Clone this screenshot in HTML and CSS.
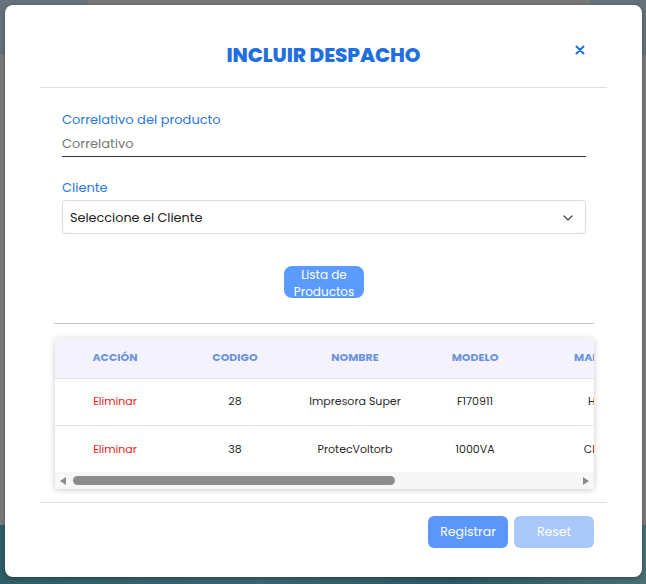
FILE: index.html
```html
<!DOCTYPE html>
<html lang="es">
<head>
<meta charset="utf-8">
<title>Incluir Despacho</title>
<link rel="stylesheet" href="styles.css">
</head>
<body>
<div class="backdrop">
  <div class="bg-top"><div class="bg-side"></div><div class="bg-mid"></div><div class="bg-side bg-side-r"></div></div>
  <div class="bg-main"></div>
  <div class="bg-bottom"></div>
</div>

<div class="modal">
  <div class="modal-header">
    <h1 class="modal-title">INCLUIR DESPACHO</h1>
    <button class="close-btn" aria-label="Cerrar">
      <svg width="10" height="10" viewBox="0 0 10 10"><path d="M1.5 1.5 L8.5 8.5 M8.5 1.5 L1.5 8.5" stroke="#1f6fe0" stroke-width="2" stroke-linecap="round"/></svg>
    </button>
  </div>

  <div class="modal-body">
    <div class="field">
      <label class="field-label">Correlativo del producto</label>
      <div class="line-input">Correlativo</div>
    </div>
    <div class="field field-client">
      <label class="field-label">Cliente</label>
      <div class="select">
        <span>Seleccione el Cliente</span>
        <svg width="10" height="6" viewBox="0 0 10 6"><path d="M1 1 L5 5 L9 1" fill="none" stroke="#444" stroke-width="1.3" stroke-linecap="round" stroke-linejoin="round"/></svg>
      </div>
    </div>
    <div class="list-row">
      <button class="list-btn">Lista de<br>Productos</button>
    </div>
  </div>

  <div class="table-divider"></div>

  <div class="table-card">
    <div class="table-scroll">
      <table class="products">
        <thead>
          <tr><th>ACCIÓN</th><th>CODIGO</th><th>NOMBRE</th><th>MODELO</th><th>MARCA</th></tr>
        </thead>
        <tbody>
          <tr><td class="del">Eliminar</td><td>28</td><td>Impresora Super</td><td>F170911</td><td>HP</td></tr>
          <tr><td class="del">Eliminar</td><td>38</td><td>ProtecVoltorb</td><td>1000VA</td><td>CDP</td></tr>
        </tbody>
      </table>
    </div>
    <div class="hscroll">
      <span class="arrow arrow-l"></span>
      <div class="track"><div class="thumb"></div></div>
      <span class="arrow arrow-r"></span>
    </div>
  </div>

  <div class="modal-footer">
    <button class="btn btn-primary">Registrar</button>
    <button class="btn btn-disabled">Reset</button>
  </div>
</div>
</body>
</html>
```

FILE: styles.css
```css
* { box-sizing: border-box; }
html, body { margin: 0; padding: 0; }
body {
  width: 646px;
  height: 584px;
  overflow: hidden;
  font-family: "Poppins", "Open Sans", "DejaVu Sans", sans-serif;
  position: relative;
  background: #7a7a7a;
}

.backdrop { display: flex; flex-direction: column; height: 584px; }
.bg-top { display: flex; height: 55px; }
.bg-side { width: 88px; background: #66727a; }
.bg-side-r { width: 56px; }
.bg-mid { flex: 1; background: #787878; }
.bg-main { flex: 1; background: #7b7b7b; }
.bg-bottom { height: 59px; background: linear-gradient(90deg, #2f5d66 0%, #3a6670 40%, #2c5860 70%, #4a6e74 100%); }

.modal {
  position: absolute;
  left: 5px;
  top: 5px;
  width: 637px;
  height: 572px;
  background: #fff;
  border-radius: 8px;
  box-shadow: 0 1px 4px rgba(0,0,0,0.35);
  padding: 0 35px;
}

.modal-header {
  height: 83px;
  border-bottom: 1px solid #dedede;
  position: relative;
  display: flex;
  align-items: center;
  justify-content: center;
}
.modal-title {
  margin: 0;
  margin-top: 18px;
  font-size: 20px;
  font-weight: 800;
  color: #1f6fe0;
  letter-spacing: -0.1px;
  line-height: 24px;
}
.close-btn {
  position: absolute;
  right: 20px;
  top: 38px;
  width: 14px;
  height: 14px;
  padding: 0;
  border: 0;
  background: none;
  display: flex;
  align-items: center;
  justify-content: center;
}

.modal-body { padding: 1px 21px 0 22px; }
.field { padding-top: 22px; }
.field-label {
  display: block;
  font-size: 13px;
  line-height: 18px;
  color: #2a78dc;
}
.line-input {
  margin-top: 3px;
  height: 25px;
  border-bottom: 1px solid #333;
  font-size: 13px;
  line-height: 24px;
  color: #777;
}
.select {
  margin-top: 3px;
  height: 34px;
  border: 1px solid #dcdcdc;
  border-radius: 4px;
  padding: 1px 12px 0 7px;
  display: flex;
  align-items: center;
  justify-content: space-between;
  font-size: 12.8px;
  color: #222;
}

.list-row { display: flex; justify-content: center; padding-top: 32px; }
.list-btn {
  width: 80px;
  height: 32px;
  border: 0;
  border-radius: 8px;
  background: #5b9bff;
  color: #fff;
  font-family: inherit;
  font-size: 12px;
  line-height: 17px;
  padding: 0 0 1px;
}

.table-divider {
  margin: 25px 13px 0 14px;
  height: 1px;
  background: #c8c8c8;
}

.table-card {
  margin: 14px 13px 0 15px;
  height: 151px;
  border-radius: 4px;
  box-shadow: 0 1px 6px rgba(0,0,0,0.22);
  overflow: hidden;
  background: #fff;
}
.table-scroll { overflow: hidden; height: 134px; }
.products {
  border-collapse: collapse;
  table-layout: fixed;
  width: 600px;
}
.products th, .products td {
  width: 120px;
  text-align: center;
  white-space: nowrap;
  padding: 0;
}
.products th {
  height: 40px;
  background: #f3f2fd;
  border-bottom: 1px solid #e3e3ec;
  font-size: 11px;
  font-weight: 700;
  color: #6b93dc;
}
.products td {
  height: 47px;
  border-bottom: 1px solid #e3e3ec;
  font-size: 11px;
  color: #2a2a2a;
}
.products tbody tr:nth-child(2) td { padding-top: 2px; }
.products td.del { color: #ec2020; }

.hscroll {
  height: 17px;
  background: #f7f7f7;
  display: flex;
  align-items: center;
  padding: 0 5px;
}
.arrow { width: 0; height: 0; border-top: 4.5px solid transparent; border-bottom: 4.5px solid transparent; }
.arrow-l { border-right: 6px solid #8a8a8a; }
.arrow-r { border-left: 6px solid #8a8a8a; }
.track { flex: 1; padding: 0 7px; }
.thumb { width: 322px; height: 9px; border-radius: 4.5px; background: #8d8d8d; }

.modal-footer {
  margin-top: 13px;
  border-top: 1px solid #dedede;
  padding: 13px 13px 0 0;
  display: flex;
  justify-content: flex-end;
  gap: 6px;
}
.btn {
  width: 80px;
  height: 32px;
  border: 0;
  border-radius: 6px;
  color: #fff;
  font-family: inherit;
  font-size: 12.5px;
  padding: 0;
}
.btn-primary { background: #5b96fa; }
.btn-disabled { background: #a9c9fb; }
```
